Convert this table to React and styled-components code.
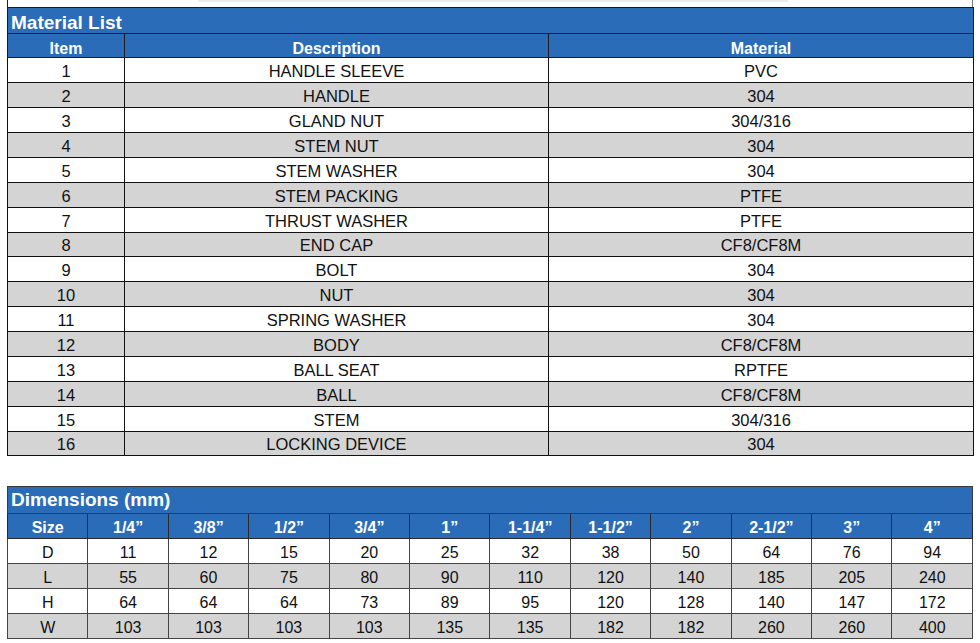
import React from 'react';
import styled, { createGlobalStyle } from 'styled-components';

const GlobalStyle = createGlobalStyle`
  body {
    margin: 0;
    background: #ffffff;
    font-family: "Liberation Sans", Arial, sans-serif;
  }
`;

const Page = styled.div`
  padding: 0 0 0 7px;
  width: 966px;
`;

const TopStrip = styled.div`
  height: 7px;
  border-left: 1px solid #222;
  border-right: 1px solid #777;
  box-sizing: border-box;
  display: flex;
  padding-left: 190px;
`;

const TopBar = styled.div`
  width: 590px;
  height: 2px;
  background: #ececec;
`;

const Table = styled.table`
  width: 966px;
  border-collapse: collapse;
  table-layout: fixed;
  margin-bottom: ${p => p.$gap || 0}px;
`;

const TitleCell = styled.th`
  background: #2a6cb7;
  color: #fff;
  font-size: 19px;
  font-weight: 700;
  text-align: left;
  padding: 0 0 ${p => p.$pb}px 3px;
  height: ${p => p.$h}px;
  box-sizing: border-box;
  vertical-align: bottom;
  line-height: 19px;
  border: 1px solid ${p => p.$line};
`;

const HeadCell = styled.th`
  background: #2a6cb7;
  color: #fff;
  font-size: 16px;
  font-weight: 700;
  text-align: center;
  padding: 0 0 ${p => p.$pb}px;
  height: ${p => p.$h}px;
  box-sizing: border-box;
  vertical-align: bottom;
  line-height: 17px;
  border: 1px solid ${p => p.$line};
`;

const Cell = styled.td`
  background: ${p => (p.$shade ? '#d4d4d4' : '#ffffff')};
  color: #111;
  font-size: ${p => p.$size}px;
  text-align: center;
  padding: 0 0 1px;
  height: ${p => p.$h}px;
  box-sizing: border-box;
  vertical-align: bottom;
  line-height: 19px;
  border: 1px solid ${p => p.$line};
  white-space: nowrap;
`;

const materials = [
  ['1', 'HANDLE SLEEVE', 'PVC'],
  ['2', 'HANDLE', '304'],
  ['3', 'GLAND NUT', '304/316'],
  ['4', 'STEM NUT', '304'],
  ['5', 'STEM WASHER', '304'],
  ['6', 'STEM PACKING', 'PTFE'],
  ['7', 'THRUST WASHER', 'PTFE'],
  ['8', 'END CAP', 'CF8/CF8M'],
  ['9', 'BOLT', '304'],
  ['10', 'NUT', '304'],
  ['11', 'SPRING WASHER', '304'],
  ['12', 'BODY', 'CF8/CF8M'],
  ['13', 'BALL SEAT', 'RPTFE'],
  ['14', 'BALL', 'CF8/CF8M'],
  ['15', 'STEM', '304/316'],
  ['16', 'LOCKING DEVICE', '304'],
];

const sizes = ['1/4”', '3/8”', '1/2”', '3/4”', '1”', '1-1/4”', '1-1/2”', '2”', '2-1/2”', '3”', '4”'];

const dims = [
  ['D', 11, 12, 15, 20, 25, 32, 38, 50, 64, 76, 94],
  ['L', 55, 60, 75, 80, 90, 110, 120, 140, 185, 205, 240],
  ['H', 64, 64, 64, 73, 89, 95, 120, 128, 140, 147, 172],
  ['W', 103, 103, 103, 103, 135, 135, 182, 182, 260, 260, 400],
];

const MaterialList = () => (
  <Table $gap={30}>
    <colgroup>
      <col style={{ width: 117 }} />
      <col style={{ width: 424 }} />
      <col style={{ width: 425 }} />
    </colgroup>
    <thead>
      <tr>
        <TitleCell colSpan={3} $h={26} $pb={1} $line="#1b1b1b">Material List</TitleCell>
      </tr>
      <tr>
        <HeadCell $h={24} $pb={0} $line="#1b1b1b">Item</HeadCell>
        <HeadCell $h={24} $pb={0} $line="#1b1b1b">Description</HeadCell>
        <HeadCell $h={24} $pb={0} $line="#1b1b1b">Material</HeadCell>
      </tr>
    </thead>
    <tbody>
      {materials.map((row, i) => (
        <tr key={row[0]}>
          {row.map((v, j) => (
            <Cell key={j} $h={i % 8 === 7 ? 24 : 25} $size={16.5} $shade={i % 2 === 1} $line="#111">{v}</Cell>
          ))}
        </tr>
      ))}
    </tbody>
  </Table>
);

const Dimensions = () => (
  <Table>
    <thead>
      <tr>
        <TitleCell colSpan={12} $h={27} $pb={4} $line="#3a3a3a">Dimensions (mm)</TitleCell>
      </tr>
      <tr>
        <HeadCell $h={25} $pb={2} $line="#2a2a2a">Size</HeadCell>
        {sizes.map(s => (
          <HeadCell key={s} $h={25} $pb={2} $line="#2a2a2a">{s}</HeadCell>
        ))}
      </tr>
    </thead>
    <tbody>
      {dims.map((row, i) => (
        <tr key={row[0]}>
          {row.map((v, j) => (
            <Cell key={j} $h={25} $size={16} $shade={i % 2 === 1} $line="#444">{v}</Cell>
          ))}
        </tr>
      ))}
    </tbody>
  </Table>
);

export default function App() {
  return (
    <>
      <GlobalStyle />
      <Page>
        <TopStrip>
          <TopBar />
        </TopStrip>
        <MaterialList />
        <Dimensions />
      </Page>
    </>
  );
}
